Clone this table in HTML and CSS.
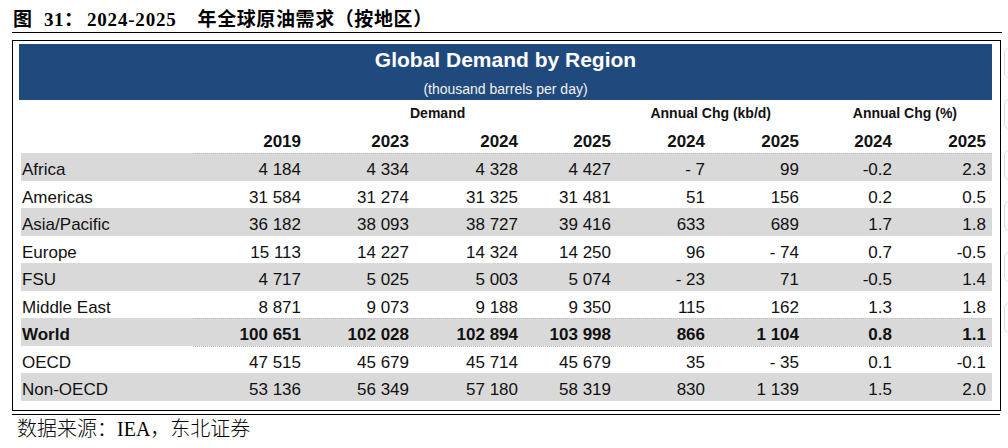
FILE: index.html
```html
<!DOCTYPE html>
<html lang="zh">
<head>
<meta charset="utf-8">
<title>Global Demand by Region</title>
<link rel="stylesheet" href="styles.css">
</head>
<body>
<div class="caption"><span class="cap-fig">图</span><span class="cap-num">31</span><span class="cap-colon">：</span><span class="cap-years">2024-2025</span><span class="cap-text">年全球原油需求（按地区）</span></div>
<div class="box">
  <div class="banner">
    <div class="banner-title">Global Demand by Region</div>
    <div class="banner-sub">(thousand barrels per day)</div>
  </div>
  <div class="grid head1">
    <div class="h-demand">Demand</div>
    <div class="h-kbd">Annual Chg (kb/d)</div>
    <div class="h-pct">Annual Chg (%)</div>
  </div>
  <div class="grid head2">
    <div></div><div>2019</div><div>2023</div><div>2024</div><div>2025</div><div>2024</div><div>2025</div><div>2024</div><div>2025</div>
  </div>
  <div class="grid row shade dotted"><div>Africa</div><div>4 184</div><div>4 334</div><div>4 328</div><div>4 427</div><div>- 7</div><div>99</div><div>-0.2</div><div>2.3</div></div>
  <div class="grid row"><div>Americas</div><div>31 584</div><div>31 274</div><div>31 325</div><div>31 481</div><div>51</div><div>156</div><div>0.2</div><div>0.5</div></div>
  <div class="grid row shade"><div>Asia/Pacific</div><div>36 182</div><div>38 093</div><div>38 727</div><div>39 416</div><div>633</div><div>689</div><div>1.7</div><div>1.8</div></div>
  <div class="grid row"><div>Europe</div><div>15 113</div><div>14 227</div><div>14 324</div><div>14 250</div><div>96</div><div>- 74</div><div>0.7</div><div>-0.5</div></div>
  <div class="grid row shade"><div>FSU</div><div>4 717</div><div>5 025</div><div>5 003</div><div>5 074</div><div>- 23</div><div>71</div><div>-0.5</div><div>1.4</div></div>
  <div class="grid row"><div>Middle East</div><div>8 871</div><div>9 073</div><div>9 188</div><div>9 350</div><div>115</div><div>162</div><div>1.3</div><div>1.8</div></div>
  <div class="grid row shade bold dotted"><div>World</div><div>100 651</div><div>102 028</div><div>102 894</div><div>103 998</div><div>866</div><div>1 104</div><div>0.8</div><div>1.1</div></div>
  <div class="grid row dotted"><div>OECD</div><div>47 515</div><div>45 679</div><div>45 714</div><div>45 679</div><div>35</div><div>- 35</div><div>0.1</div><div>-0.1</div></div>
  <div class="grid row shade"><div>Non-OECD</div><div>53 136</div><div>56 349</div><div>57 180</div><div>58 319</div><div>830</div><div>1 139</div><div>1.5</div><div>2.0</div></div>
</div>
<div class="source"><span class="src-cjk">数据来源：</span><span class="src-lat">IEA</span><span class="src-cjk">，东北证券</span></div>
<div class="side">
  <div class="side-box"></div>
  <div class="side-box"></div>
  <div class="side-box"></div>
  <div class="side-box"></div>
  <div class="side-box"></div>
  <div class="side-box"></div>
</div>
</body>
</html>
```
FILE: styles.css
```css
html, body {
  margin: 0;
  padding: 0;
  background: #fff;
}
body {
  width: 1008px;
  height: 448px;
  overflow: hidden;
  position: relative;
  color: #111;
  font-family: "Liberation Sans", Arial, sans-serif;
}
.caption {
  display: flex;
  align-items: baseline;
  margin-left: 12px;
  width: 989px;
  height: 26px;
  padding-top: 6px;
  padding-left: 1px;
  box-sizing: content-box;
  border-bottom: 1px solid #000;
  font-family: "Liberation Serif", "Noto Sans CJK SC", serif;
  font-weight: bold;
  font-size: 19px;
  line-height: 24px;
  color: #000;
  white-space: nowrap;
  text-spacing-trim: space-all;
}
.cap-fig, .cap-text, .cap-colon {
  font-family: "Noto Sans CJK SC", sans-serif;
}
.cap-num {
  margin-left: 12px;
  letter-spacing: 0.5px;
}
.cap-colon {
  display: inline-block;
  width: 23px;
}
.cap-years {
  letter-spacing: 0.8px;
}
.cap-text {
  margin-left: 21px;
  letter-spacing: 0.6px;
}
.box {
  margin: 7px 0 0 12px;
  width: 989px;
  box-sizing: border-box;
  border: 1px solid #000;
  padding: 3px 8px 9px 6px;
}
.banner {
  background: #204a7d;
  height: 56px;
  color: #fff;
  text-align: center;
  padding-top: 4px;
  box-sizing: border-box;
}
.banner-title {
  font-size: 21px;
  font-weight: bold;
  line-height: 24px;
}
.banner-sub {
  font-size: 14px;
  line-height: 18px;
  margin-top: 8px;
  color: #f2f2f2;
}
.grid {
  display: grid;
  grid-template-columns: 172px 108px 108px 109px 93px 94px 94px 93px 94px;
  padding-right: 6px;
  margin-left: 2px;
}
.grid > div {
  text-align: right;
  white-space: nowrap;
}
.grid > div:first-child {
  text-align: left;
  padding-left: 1px;
}
.head1 {
  height: 27px;
  font-size: 14px;
  font-weight: bold;
  line-height: 27px;
}
.head1 .h-demand {
  grid-column: 4 / 5;
  padding-right: 34px;
  text-align: right;
}
.head1 .h-kbd {
  grid-column: 6 / 8;
  padding-right: 28px;
  text-align: right;
}
.head1 .h-pct {
  grid-column: 8 / 10;
  padding-right: 29px;
  text-align: right;
}
.head2 {
  height: 26px;
  box-sizing: border-box;
  padding-top: 4px;
  font-size: 17px;
  font-weight: bold;
  line-height: 22px;
}
.row {
  height: 27.5px;
  box-sizing: border-box;
  padding-top: 6px;
  font-size: 17px;
  line-height: 21.5px;
}
.row.shade {
  background: #d9d9d9;
}
.row.bold {
  font-weight: bold;
}
.row.dotted {
  background-image: repeating-linear-gradient(90deg, #bdbdbd 0 1px, transparent 1px 2px);
  background-size: 100% 1px;
  background-position: 172px 0;
  background-repeat: no-repeat;
}
.row.shade.dotted {
  background-color: #d9d9d9;
}
.source {
  margin: 3px 0 0 12px;
  width: 988px;
  border-top: 1px solid #000;
  padding-left: 5px;
  box-sizing: border-box;
  font-family: "Liberation Serif", "Noto Sans CJK SC", serif;
  font-size: 20px;
  line-height: 26px;
  color: #000;
}
.src-cjk {
  font-family: "Noto Sans CJK SC", sans-serif;
  font-weight: 300;
}
.side {
  position: absolute;
  left: 1004px;
  top: 48px;
  display: flex;
  flex-direction: column;
  gap: 21px;
}
.side-box {
  width: 12px;
  height: 30px;
  border: 1px solid #dcdcdc;
  border-radius: 5px;
  box-sizing: border-box;
}
```
